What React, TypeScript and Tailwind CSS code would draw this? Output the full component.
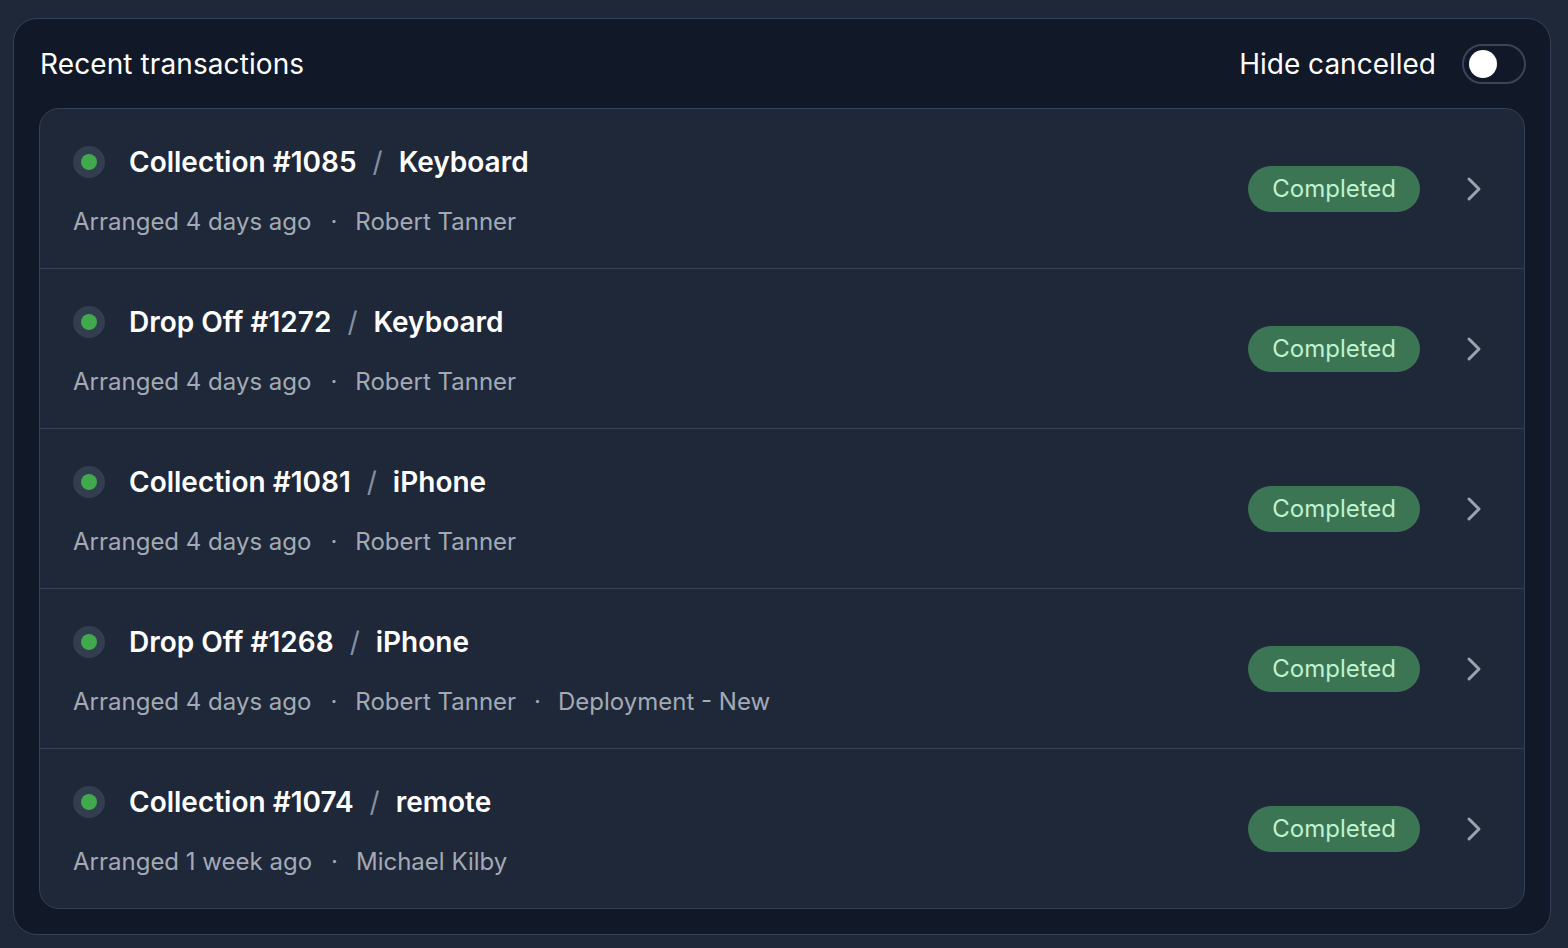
import React from "react";

type Tx = { kind: string; num: string; item: string; when: string; who: string; extra?: string };

const rows: Tx[] = [
  { kind: "Collection", num: "#1085", item: "Keyboard", when: "Arranged 4 days ago", who: "Robert Tanner" },
  { kind: "Drop Off", num: "#1272", item: "Keyboard", when: "Arranged 4 days ago", who: "Robert Tanner" },
  { kind: "Collection", num: "#1081", item: "iPhone", when: "Arranged 4 days ago", who: "Robert Tanner" },
  { kind: "Drop Off", num: "#1268", item: "iPhone", when: "Arranged 4 days ago", who: "Robert Tanner", extra: "Deployment - New" },
  { kind: "Collection", num: "#1074", item: "remote", when: "Arranged 1 week ago", who: "Michael Kilby" },
];

function Chevron() {
  return (
    <svg width="40" height="40" viewBox="0 0 24 24" fill="none" stroke="#9ca3af" strokeWidth="1.8" strokeLinecap="round" strokeLinejoin="round">
      <path d="m9 18 6-6-6-6" />
    </svg>
  );
}

export default function App() {
  return (
    <div
      className="min-h-[948px] w-full bg-[#1f2838] pt-[18px] pl-[13px]"
      style={{ fontFamily: "Inter, 'Noto Sans', sans-serif" }}
    >
      <div className="w-[1538px] h-[917px] rounded-[24px] border border-[#344156] bg-[#111827] px-[25px] pt-[25px]">
        <div className="flex items-center justify-between h-[40px] pl-px">
          <div className="text-[28px] leading-[40px] text-white font-normal tracking-[0.1px]">Recent transactions</div>
          <div className="flex items-center gap-[26px] -mr-px">
            <span className="text-[28px] leading-[40px] text-white">Hide cancelled</span>
            <div className="w-[64px] h-[40px] rounded-full border-2 border-[#3a4557] bg-[#111827] flex items-center pl-[5px]">
              <div className="w-[28px] h-[28px] rounded-full bg-white" />
            </div>
          </div>
        </div>
        <div className="mt-[24px] rounded-[20px] border border-[#344156] bg-[#1f2839] overflow-hidden">
          {rows.map((r, i) => (
            <div
              key={i}
              className={`${i > 0 ? "h-[160px] border-t border-[#344156]" : "h-[159px]"} flex items-center pl-[33px] pr-[30px]`}
            >
              <div className="flex-1 flex flex-col gap-[24px] mt-[3px]">
                <div className="flex items-center">
                  <div className="w-[32px] h-[32px] rounded-full bg-[#323d4f] flex items-center justify-center">
                    <div className="w-[16px] h-[16px] rounded-full bg-[#3fa94c]" />
                  </div>
                  <div className="ml-[24px] flex items-center text-[28px] leading-[40px] font-semibold text-white">
                    <span>{r.kind} {r.num}</span>
                    <span className="mx-[16px] font-normal text-[#8590a3]">/</span>
                    <span>{r.item}</span>
                  </div>
                </div>
                <div className="flex items-center text-[24px] leading-[32px] text-[#a3aab6]">
                  <span>{r.when}</span>
                  <span className="ml-[19px] mr-[18px]">·</span>
                  <span>{r.who}</span>
                  {r.extra && (
                    <>
                      <span className="ml-[18px] mr-[17px]">·</span>
                      <span>{r.extra}</span>
                    </>
                  )}
                </div>
              </div>
              <div className="flex items-center gap-[34px]">
                <div className="h-[46px] rounded-full bg-[#3b7554] px-[24px] flex items-center text-[24px] leading-[32px] text-[#c0f2cf]">
                  Completed
                </div>
                <Chevron />
              </div>
            </div>
          ))}
        </div>
      </div>
    </div>
  );
}
